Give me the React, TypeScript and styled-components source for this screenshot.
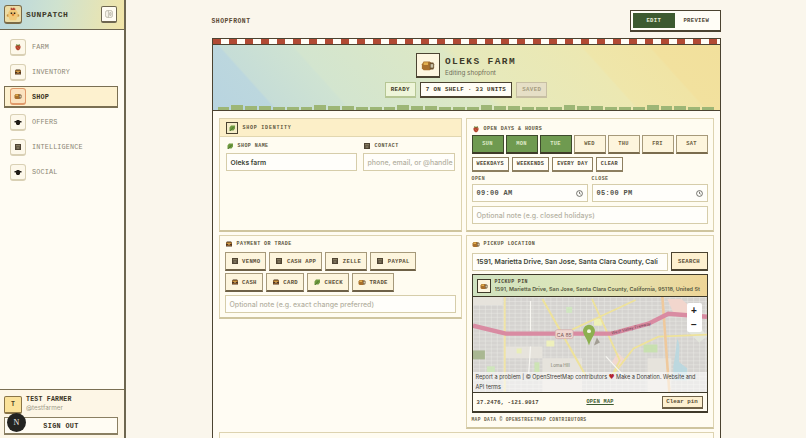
import * as React from 'react'
import styled, { createGlobalStyle } from 'styled-components'

const mono = `'Liberation Mono', 'DejaVu Sans Mono', monospace`
const sans = `Inter, 'Liberation Sans', sans-serif`

const GlobalStyle = createGlobalStyle`
  html, body, #root {
    margin: 0;
    height: 100%;
    overflow: hidden;
  }
  * { box-sizing: border-box; }
  svg { display: block; }
  body {
    background: #faf6ec;
    font-family: ${sans};
  }
`

const Page = styled.div`
  display: flex;
  height: 438px;
  width: 806px;
  overflow: hidden;
`

/* ---------- pixel icons ---------- */

const Berry = () => (
  <svg viewBox="0 0 16 16" width="100%" height="100%">
    <path d="M3 6l3-2h5l2 2v4l-2 3-3 2-3-2-2-3z" fill="#b5452f" />
    <path d="M5 2l3 2 3-2 1 3H4z" fill="#5f8a3a" />
    <path d="M6 8h1v1H6zM10 7h1v1h-1zM8 11h1v1H8z" fill="#e9b77e" />
  </svg>
)
const Chest = () => (
  <svg viewBox="0 0 16 16" width="100%" height="100%">
    <path d="M2 5l2-2h8l2 2v8H2z" fill="#4d3420" />
    <path d="M3 5h10v3H3z" fill="#c98c35" />
    <path d="M3 10h10v2H3z" fill="#8c5a28" />
    <path d="M7 7h2v3H7z" fill="#f1d487" />
  </svg>
)
const Pouch = () => (
  <svg viewBox="0 0 16 16" width="100%" height="100%">
    <path d="M1 7l2-3h7l2 2v6l-2 2H3l-2-2z" fill="#a8702c" />
    <path d="M3 5h5v3H3z" fill="#e2b04f" />
    <path d="M10 5h4l1 2v4l-1 2h-4z" fill="#6e5330" />
    <path d="M11 7h3v4h-3z" fill="#c9c2a8" />
  </svg>
)
const Hat = () => (
  <svg viewBox="0 0 16 16" width="100%" height="100%">
    <path d="M1 6h4V4h6v2h4v3h-3v3l-2 2H6l-2-2V9H1z" fill="#1f1a14" />
  </svg>
)
const Book = () => (
  <svg viewBox="0 0 16 16" width="100%" height="100%">
    <path d="M2 2h12v12H2z" fill="#4f4433" />
    <path d="M4 4h8v3H4z" fill="#857a60" />
    <path d="M5 9h6v1H5zM5 11h6v1H5z" fill="#a89d82" />
  </svg>
)
const Leaf = () => (
  <svg viewBox="0 0 16 16" width="100%" height="100%">
    <path d="M3 14V7l3-4h8v6l-3 4H6z" fill="#6f9a3f" />
    <path d="M4 14l7-8" stroke="#3f6526" strokeWidth="1.4" fill="none" />
  </svg>
)
const Chick = () => (
  <svg viewBox="0 0 18 18" width="100%" height="100%">
    <path d="M6 1h2v1h1V1h2v1h1v2H6z" fill="#b5452f" />
    <path d="M5 4h8l2 3v5l-2 5H5l-2-5V7z" fill="#f1c877" />
    <path d="M6 7h2v2H6zM10 7h2v2h-2z" fill="#2a2118" />
    <path d="M8 9h2l1 1-2 2-2-2z" fill="#d97b2c" />
    <path d="M1 10l2-1v4l-2-1zM17 10l-2-1v4l2-1z" fill="#c9923f" />
  </svg>
)

/* ---------- sidebar ---------- */

const Sidebar = styled.aside`
  flex: 0 0 126px;
  display: flex;
  flex-direction: column;
  background: #fffcf3;
  border-right: 2px solid #6d6650;
`

const Brand = styled.div`
  height: 30px;
  flex: none;
  display: flex;
  align-items: center;
  gap: 4px;
  padding: 0 7px 0 4px;
  background: linear-gradient(100deg, #b9d7df 0%, #cfe2cf 45%, #f2e5a8 100%);
  border-bottom: 1.5px solid #6d6650;
`

const Logo = styled.div`
  width: 18px;
  height: 19px;
  padding: 1px;
  border: 1px solid #7a6a48;
  border-bottom-width: 2px;
  border-radius: 3px;
  background: #eddca5;
`

const BrandName = styled.span`
  flex: 1;
  font: bold 8px ${mono};
  letter-spacing: 0.5px;
  color: #3d3a2a;
`

const Collapse = styled.button`
  width: 16px;
  height: 17px;
  padding: 3px;
  display: flex;
  border: 1px solid #6d6650;
  border-bottom-width: 2px;
  border-radius: 2px;
  background: #fffcf3;
  color: #a3a08f;
`

const Nav = styled.nav`
  flex: 1;
  display: flex;
  flex-direction: column;
  gap: 3px;
  padding: 6px 6px 0 4px;
`

const NavItem = styled.div<{ $active?: boolean }>`
  height: 22px;
  display: flex;
  align-items: center;
  gap: 6px;
  padding-left: 5px;
  font: ${p => (p.$active ? 'bold' : 'normal')} 6.8px ${mono};
  letter-spacing: 0.15px;
  color: ${p => (p.$active ? '#3a3424' : '#8d8775')};
  background: ${p => (p.$active ? '#fdf1cf' : 'transparent')};
  border: ${p => (p.$active ? '1px solid #7a6f52' : '1px solid transparent')};
  border-bottom-width: ${p => (p.$active ? '2px' : '1px')};
`

const NavIcon = styled.span<{ $active?: boolean }>`
  width: 16px;
  height: 17px;
  padding: 3px;
  flex: none;
  display: block;
  border: 1px solid ${p => (p.$active ? '#e09a6a' : '#d9d0b4')};
  border-bottom-width: 2px;
  border-radius: 3px;
  background: ${p => (p.$active ? '#fbe3c0' : '#fdf8ea')};
`

const UserArea = styled.div`
  flex: none;
  height: 49px;
  padding: 6px 6px 0 4px;
  display: flex;
  flex-direction: column;
  gap: 3px;
  background: #fdf6e6;
  border-top: 1.5px solid #7a6f52;
`

const UserRow = styled.div`
  display: flex;
  gap: 4px;
  align-items: flex-start;
`

const Avatar = styled.div`
  width: 18px;
  height: 18px;
  display: flex;
  align-items: center;
  justify-content: center;
  font: bold 6.5px ${mono};
  color: #4a3f25;
  background: #fbe29a;
  border: 1px solid #8a7547;
  border-bottom-width: 2px;
  border-radius: 2px;
`

const UserName = styled.div`
  font: bold 6.5px/8px ${mono};
  letter-spacing: 0.25px;
  color: #3a3424;
`

const UserHandle = styled.div`
  font: 6.3px/9px ${sans};
  color: #a29c8a;
`

const SignOut = styled.button`
  height: 18px;
  padding: 0;
  font: bold 6.8px ${mono};
  letter-spacing: 0.35px;
  color: #3a3424;
  background: #fffcf3;
  border: 1px solid #8a7f62;
  border-bottom-width: 2px;
`

const DevBadge = styled.div`
  position: fixed;
  left: 7px;
  top: 413px;
  width: 19px;
  height: 19px;
  display: flex;
  align-items: center;
  justify-content: center;
  border-radius: 50%;
  background: #232321;
  color: #f4f4f0;
  font: 8px 'Liberation Serif', serif;
`

/* ---------- main column ---------- */

const Main = styled.main`
  flex: 1;
  min-width: 0;
  padding-top: 10px;
  overflow: hidden;
`

const Column = styled.div`
  width: 509px;
  margin: 0 auto;
`

const TopBar = styled.div`
  height: 22px;
  margin-bottom: 6px;
  display: flex;
  align-items: center;
  justify-content: space-between;
`

const PageTitle = styled.h1`
  margin: 0;
  font: bold 6.4px ${mono};
  letter-spacing: 0.5px;
  color: #5a4b35;
`

const Toggle = styled.div`
  width: 91px;
  height: 22px;
  padding: 2px;
  display: flex;
  background: #fffdf6;
  border: 1px solid #4b4331;
  border-bottom-width: 2px;
`

const ToggleOption = styled.div<{ $on?: boolean }>`
  flex: 1;
  display: flex;
  align-items: center;
  justify-content: center;
  font: bold 5.6px ${mono};
  letter-spacing: 0.3px;
  color: ${p => (p.$on ? '#e8eedc' : '#4b4331')};
  background: ${p => (p.$on ? '#3d5a30' : 'transparent')};
`

const Frame = styled.section`
  background: #fffcf3;
  border: 1px solid #4b4331;
  border-bottom: 0;
`

const Awning = styled.div`
  height: 6px;
  background: repeating-linear-gradient(90deg, #b14a34 0 8px, #fffdf6 8px 16px);
  border-bottom: 1px solid #4b4331;
`

const Banner = styled.div`
  height: 66px;
  display: flex;
  flex-direction: column;
  align-items: center;
  background: linear-gradient(
    48deg,
    #b8d4e0 0%,
    #bcd7de 11%,
    #c6ddd7 11.5%,
    #cfe3d2 24%,
    #d3e5cf 24.5%,
    #dde8c5 50%,
    #e6e9bc 52%,
    #ece8b2 75%,
    #efe6aa 75.5%,
    #f0e4a5 87%,
    #f2e19e 87.5%,
    #f2e09c 100%
  );
  border-bottom: 1px solid #4b4331;
`

const ShopHead = styled.div`
  margin-top: 8px;
  display: flex;
  gap: 5px;
`

const ShopBadge = styled.div`
  width: 24px;
  height: 25px;
  padding: 4px;
  background: #fdf6e0;
  border: 1px solid #4b4331;
  border-bottom-width: 2px;
`

const ShopName = styled.div`
  margin-top: 3px;
  font: bold 9.5px/12px ${mono};
  letter-spacing: 1.4px;
  color: #3d3a2a;
`

const ShopSub = styled.div`
  margin-top: 1px;
  font: 6.3px/9px ${sans};
  color: #6f6c58;
`

const Chips = styled.div`
  margin-top: 4px;
  display: flex;
  gap: 4px;
`

const Chip = styled.div<{ $tone: 'ready' | 'count' | 'saved' }>`
  height: 16px;
  padding: 0 5px;
  display: flex;
  align-items: center;
  font: bold 5.8px ${mono};
  letter-spacing: 0.35px;
  white-space: nowrap;
  color: ${p => (p.$tone === 'saved' ? '#a59d80' : '#3a3424')};
  background: ${p => ({ ready: '#eef5d9', count: '#fffdf6', saved: '#e6dfc6' })[p.$tone]};
  border: 1px solid ${p => ({ ready: '#b6c694', count: '#4b4331', saved: '#c7bfa3' })[p.$tone]};
  border-bottom-width: 2px;
`

const Grass = styled.div`
  margin-top: auto;
  width: 100%;
  padding-left: 5px;
  display: flex;
  align-items: flex-end;
  gap: 2px;
  overflow: hidden;
`

const Tuft = styled.span<{ $h: number }>`
  flex: 0 0 11.85px;
  height: ${p => p.$h}px;
  background: #9db676;
`

const Board = styled.div`
  padding: 7px 7px 0 6px;
  display: grid;
  grid-template-columns: 243px 248px;
  gap: 3px 4px;
`

const Card = styled.div<{ $wide?: boolean; $top?: boolean }>`
  grid-column: ${p => (p.$wide ? '1 / -1' : 'auto')};
  align-self: ${p => (p.$top ? 'start' : 'stretch')};
  background: #fffcf1;
  border: 1px solid #ddd3b0;
  border-bottom: 2px solid #cfc59f;
`

const CardBody = styled.div<{ $compact?: boolean }>`
  padding: ${p => (p.$compact ? '3px 5px 4px' : '5px 5px 6px')};
  display: flex;
  flex-direction: column;
`

const IdentityHead = styled.div`
  height: 18px;
  padding: 0 6px;
  display: flex;
  align-items: center;
  gap: 5px;
  background: #fcefc8;
  border-bottom: 1px solid #e2d7b0;
`

const HeadBox = styled.span`
  width: 12px;
  height: 12px;
  padding: 1px;
  display: block;
  background: #f5edc8;
  border: 1px solid #4b4331;
`

const Heading = styled.div`
  display: flex;
  align-items: center;
  gap: 4px;
  height: 10px;
  font: bold 5px ${mono};
  letter-spacing: 0.45px;
  color: #5d5640;
`

const IdentityTitle = styled(Heading)`
  letter-spacing: 0.77px;
`

const SmallIcon = styled.span`
  width: 8px;
  height: 8px;
  flex: none;
  display: block;
`

const IdentityGrid = styled.div`
  padding: 4px 6px 6px;
  display: grid;
  grid-template-columns: 131px 1fr;
  gap: 6px;
`

const Field = styled.label`
  display: flex;
  flex-direction: column;
  gap: 2px;
  min-width: 0;
`

const Input = styled.div<{ $placeholder?: boolean; $mono?: boolean }>`
  height: 18px;
  padding: 0 4px;
  display: flex;
  align-items: center;
  justify-content: space-between;
  overflow: hidden;
  white-space: nowrap;
  background: #fffefa;
  border: 1px solid #d6cdaa;
  font: ${p => (p.$mono ? `bold 7px ${mono}` : p.$placeholder ? `500 7px ${sans}` : `600 6.8px ${sans}`)};
  letter-spacing: ${p => (p.$mono ? '0.3px' : '0')};
  color: ${p => (p.$placeholder ? '#b4b1a2' : p.$mono ? '#55554c' : '#3d4536')};
`

const DayGrid = styled.div`
  margin-top: 1px;
  display: grid;
  grid-template-columns: repeat(7, 1fr);
  gap: 2px;
`

const DayButton = styled.div<{ $on?: boolean }>`
  height: 19px;
  display: flex;
  align-items: center;
  justify-content: center;
  font: bold 5.4px ${mono};
  letter-spacing: 0.3px;
  color: ${p => (p.$on ? '#dfeac8' : '#6b5d42')};
  background: ${p => (p.$on ? '#6f9a50' : '#fdf5dd')};
  border: 1px solid ${p => (p.$on ? '#3e4a2c' : '#a6997a')};
  border-bottom: 2px solid ${p => (p.$on ? '#3e3a28' : '#7a6c4e')};
`

const QuickRow = styled.div`
  margin-top: 3px;
  display: flex;
  gap: 3px;
`

const QuickButton = styled.div`
  height: 15px;
  padding: 0 4px;
  display: flex;
  align-items: center;
  font: bold 5.2px ${mono};
  letter-spacing: 0.3px;
  white-space: nowrap;
  color: #4b4331;
  background: #fffdf6;
  border: 1px solid #8d7f60;
  border-bottom-width: 2px;
`

const TimeGrid = styled.div`
  margin-top: 3px;
  display: grid;
  grid-template-columns: 1fr 1fr;
  gap: 4px;
`

const Label = styled.span`
  height: 7px;
  font: bold 4.9px/7px ${mono};
  letter-spacing: 0.45px;
  color: #6a634b;
`

const ClockIcon = () => (
  <svg width="7" height="7" viewBox="0 0 12 12" fill="none" stroke="#4a4a44" strokeWidth="1.3">
    <circle cx="6" cy="6" r="5" />
    <path d="M6 3v3l2 1" />
  </svg>
)

const NoteInput = styled(Input)<{ $gap: number }>`
  margin-top: ${p => p.$gap}px;
`

const TradeWrap = styled.div`
  display: flex;
  flex-wrap: wrap;
  gap: 2px 3px;
  margin-top: 3px;
`

const TradeButton = styled.div`
  height: 19px;
  padding: 0 5px;
  display: flex;
  align-items: center;
  gap: 3.6px;
  font: bold 5.6px ${mono};
  letter-spacing: 0.3px;
  color: #5b4f37;
  background: #fdf5dd;
  border: 1px solid #a6997a;
  border-bottom: 2px solid #6e6147;
`

const SearchRow = styled.div`
  margin-top: 3px;
  display: flex;
  align-items: center;
  gap: 3px;
`

const SearchInput = styled(Input)`
  flex: 1;
  min-width: 0;
  justify-content: flex-start;
`

const SearchButton = styled.div`
  flex: 0 0 37px;
  height: 19px;
  display: flex;
  align-items: center;
  justify-content: center;
  font: bold 5.6px ${mono};
  letter-spacing: 0.3px;
  color: #5b4f37;
  background: #fdf0d0;
  border: 1px solid #4b4331;
  border-bottom-width: 2px;
`

const PinBox = styled.div`
  margin-top: 3px;
  background: #fffcf1;
  border: 1px solid #3f3a2a;
  border-bottom-width: 2px;
`

const PinHead = styled.div`
  height: 22px;
  padding: 0 4px;
  display: flex;
  align-items: center;
  gap: 4px;
  background: linear-gradient(100deg, #cfe2c0 0%, #dfe6b8 50%, #efd596 100%);
  border-bottom: 1px solid #3f3a2a;
`

const PinIcon = styled.span`
  width: 14px;
  height: 14px;
  padding: 2px;
  flex: none;
  display: block;
  background: #fdf6e0;
  border: 1px solid #3f3a2a;
`

const PinText = styled.div`
  min-width: 0;
  flex: 1;
`

const PinTitle = styled.div`
  font: bold 4.9px/7px ${mono};
  letter-spacing: 0.4px;
  color: #4b4331;
`

const PinAddress = styled.div`
  font: 600 5.45px/8px ${sans};
  color: #55583e;
  overflow: hidden;
  white-space: nowrap;
`

const MapArea = styled.div`
  position: relative;
  height: 96px;
  overflow: hidden;
  background: #e2dfd8;
  border-bottom: 1px solid #3f3a2a;
`

const ZoomControl = styled.div`
  position: absolute;
  top: 6px;
  right: 5px;
  width: 15px;
  height: 29px;
  display: flex;
  flex-direction: column;
  background: #fff;
  border-radius: 2px;
`

const ZoomKey = styled.span`
  flex: 1;
  display: flex;
  align-items: center;
  justify-content: center;
  font: bold 10px 'Liberation Sans', sans-serif;
  color: #222;
`

const Attribution = styled.div`
  position: absolute;
  left: 0;
  right: 0;
  bottom: 0;
  padding: 0 2px 0 3px;
  font: 5.55px/10px ${sans};
  color: #3f4038;
  background: rgba(255, 255, 255, 0.55);
`

const Heart = styled.span`
  color: #b3262e;
`

const PinFoot = styled.div`
  height: 18px;
  padding: 0 4px;
  display: flex;
  align-items: center;
  justify-content: space-between;
`

const Coords = styled.span`
  font: bold 5.5px ${mono};
  letter-spacing: 0.15px;
  color: #4b4331;
`

const MapLink = styled.span`
  font: bold 5.2px ${mono};
  letter-spacing: 0.3px;
  color: #3d5a30;
  text-decoration: underline;
`

const ClearButton = styled.div`
  width: 41px;
  height: 13px;
  display: flex;
  align-items: center;
  justify-content: center;
  font: bold 5.8px ${mono};
  color: #5b4f37;
  background: #fdf0d0;
  border: 1px solid #6e6147;
  border-bottom-width: 2px;
`

const MapNote = styled.div`
  margin-top: 3px;
  font: bold 4.6px/7px ${mono};
  letter-spacing: 0.35px;
  color: #6a634b;
`

const StubCard = styled(Card)`
  height: 40px;
`

const MapDrawing = () => (
  <svg width="100%" height="100%" viewBox="0 0 236 96" preserveAspectRatio="none">
    <defs>
      <pattern id="blocks" width="6" height="4" patternUnits="userSpaceOnUse">
        <rect width="6" height="4" fill="#d5d3d0" />
        <path d="M0 0h6M0 0v4" stroke="#efede9" strokeWidth="0.8" />
      </pattern>
    </defs>
    <rect width="236" height="96" fill="url(#blocks)" />
    {/* open ground and parks */}
    <path d="M0 0h30v8H0zM32 50h38v12H32zM70 62h40v34H70zM176 62h24v34h-24z" fill="#e6e3dc" />
    <rect x="0" y="54" width="12" height="9" fill="#a9b792" />
    <rect x="74" y="44" width="8" height="6" fill="#eef0bc" />
    <rect x="44" y="52" width="5" height="5" fill="#e9eeb8" />
    <rect x="14" y="70" width="8" height="6" fill="#cfe6bc" />
    <rect x="62" y="66" width="5" height="10" fill="#cde4b4" />
    <rect x="122" y="22" width="8" height="7" fill="#edf0b8" />
    <rect x="94" y="10" width="6" height="6" fill="#cfe6c0" />
    <rect x="172" y="48" width="14" height="8" fill="#c8e0b0" />
    <path d="M146 56l8 8-6 8-8-6z" fill="#f1d8d0" />
    <path d="M196 2h14l14 12-4 8-18-6z" fill="#f2d6cd" />
    <path d="M206 42c4 8 1 16 2 24l8 6v12h-14v-14l2-12z" fill="#bcd8df" />
    <path d="M216 24l12 4 8 12-8 6-10-10z" fill="#e3e6dc" />
    {/* roads */}
    <path d="M32 0v96" stroke="#f0e4a6" strokeWidth="2" />
    <path d="M70 2l44 78" stroke="#eee29a" strokeWidth="2" fill="none" />
    <path d="M120 2l28 62-8 16" stroke="#eee29a" strokeWidth="1.8" fill="none" />
    <path d="M100 33l30-14 34-16" stroke="#eee29a" strokeWidth="1.8" fill="none" />
    <path d="M140 80l22-28 25-12 50-2" stroke="#eee29a" strokeWidth="1.8" fill="none" />
    <path d="M191 0l7 96" stroke="#efc99c" strokeWidth="2.6" />
    <path d="M58 4v30M58 50l-2 30M134 60l22 24" stroke="#f8f7f2" strokeWidth="1.2" fill="none" />
    {/* freeway */}
    <path d="M0 29l33 8h107l37-10 20-10 39 3" stroke="#d98ba2" strokeWidth="4.4" fill="none" />
    <rect x="83" y="33" width="18" height="9" rx="2" fill="#f0d7d0" stroke="#cfa3a3" strokeWidth="0.6" />
    <text x="92" y="40" fontSize="5.2" fontFamily="Inter, sans-serif" textAnchor="middle" fill="#7c5a5a">CA 85</text>
    <text x="140" y="38" fontSize="4.2" fontFamily="Inter, sans-serif" fill="#6e3f50" transform="rotate(-14 140 38)">West Valley Freeway</text>
    <text x="88" y="71" fontSize="4.4" fontFamily="Inter, sans-serif" textAnchor="middle" fill="#7c7a6c">Loma Hill</text>
    {/* pin */}
    <path d="M122 49l6-3-3-5z" fill="#8a8478" opacity="0.7" />
    <path d="M117 28c-4 0-6 4-6 6 0 5 4 7 6 15 2-8 6-10 6-15 0-2-2-6-6-6z" fill="#8cb04f" />
    <circle cx="117" cy="34.5" r="2" fill="#f2f6e2" />
  </svg>
)

const days: [string, boolean][] = [
  ['SUN', true],
  ['MON', true],
  ['TUE', true],
  ['WED', false],
  ['THU', false],
  ['FRI', false],
  ['SAT', false]
]

const navItems = [
  { label: 'FARM', icon: <Berry /> },
  { label: 'INVENTORY', icon: <Chest /> },
  { label: 'SHOP', icon: <Pouch />, active: true },
  { label: 'OFFERS', icon: <Hat /> },
  { label: 'INTELLIGENCE', icon: <Book /> },
  { label: 'SOCIAL', icon: <Hat /> }
]

const payments = [
  { label: 'VENMO', icon: <Book /> },
  { label: 'CASH APP', icon: <Book /> },
  { label: 'ZELLE', icon: <Book /> },
  { label: 'PAYPAL', icon: <Book /> },
  { label: 'CASH', icon: <Chest /> },
  { label: 'CARD', icon: <Chest /> },
  { label: 'CHECK', icon: <Leaf /> },
  { label: 'TRADE', icon: <Pouch /> }
]

const tufts = Array.from({ length: 36 }, (_, i) => [3, 5, 4.5, 4, 3.5, 3][i % 6])

export default function App() {
  return (
    <Page>
      <GlobalStyle />
      <Sidebar>
        <Brand>
          <Logo>
            <Chick />
          </Logo>
          <BrandName>SUNPATCH</BrandName>
          <Collapse>
            <svg width="100%" height="100%" viewBox="0 0 12 12" fill="none" stroke="currentColor">
              <rect x="1" y="1" width="10" height="10" rx="2" />
              <path d="M5 1v10" />
              <path d="M7 4h2v4H7z" />
            </svg>
          </Collapse>
        </Brand>
        <Nav>
          {navItems.map(item => (
            <NavItem key={item.label} $active={item.active}>
              <NavIcon $active={item.active}>{item.icon}</NavIcon>
              {item.label}
            </NavItem>
          ))}
        </Nav>
        <UserArea>
          <UserRow>
            <Avatar>T</Avatar>
            <div>
              <UserName>TEST FARMER</UserName>
              <UserHandle>@testfarmer</UserHandle>
            </div>
          </UserRow>
          <SignOut>SIGN OUT</SignOut>
        </UserArea>
      </Sidebar>
      <DevBadge>N</DevBadge>

      <Main>
        <Column>
          <TopBar>
            <PageTitle>SHOPFRONT</PageTitle>
            <Toggle>
              <ToggleOption $on>EDIT</ToggleOption>
              <ToggleOption>PREVIEW</ToggleOption>
            </Toggle>
          </TopBar>

          <Frame>
            <Awning />
            <Banner>
              <ShopHead>
                <ShopBadge>
                  <Pouch />
                </ShopBadge>
                <div>
                  <ShopName>OLEKS FARM</ShopName>
                  <ShopSub>Editing shopfront</ShopSub>
                </div>
              </ShopHead>
              <Chips>
                <Chip $tone="ready">READY</Chip>
                <Chip $tone="count">7 ON SHELF · 33 UNITS</Chip>
                <Chip $tone="saved">SAVED</Chip>
              </Chips>
              <Grass>
                {tufts.map((h, i) => (
                  <Tuft key={i} $h={h} />
                ))}
              </Grass>
            </Banner>

            <Board>
              <Card>
                <IdentityHead>
                  <HeadBox>
                    <Leaf />
                  </HeadBox>
                  <IdentityTitle>SHOP IDENTITY</IdentityTitle>
                </IdentityHead>
                <IdentityGrid>
                  <Field>
                    <Heading>
                      <SmallIcon>
                        <Leaf />
                      </SmallIcon>
                      SHOP NAME
                    </Heading>
                    <Input>Oleks farm</Input>
                  </Field>
                  <Field>
                    <Heading>
                      <SmallIcon>
                        <Book />
                      </SmallIcon>
                      CONTACT
                    </Heading>
                    <Input $placeholder>phone, email, or @handle</Input>
                  </Field>
                </IdentityGrid>
              </Card>

              <Card>
                <CardBody>
                  <Heading>
                    <SmallIcon>
                      <Berry />
                    </SmallIcon>
                    OPEN DAYS &amp; HOURS
                  </Heading>
                  <DayGrid>
                    {days.map(([day, on]) => (
                      <DayButton key={day} $on={on}>
                        {day}
                      </DayButton>
                    ))}
                  </DayGrid>
                  <QuickRow>
                    <QuickButton>WEEKDAYS</QuickButton>
                    <QuickButton>WEEKENDS</QuickButton>
                    <QuickButton>EVERY DAY</QuickButton>
                    <QuickButton>CLEAR</QuickButton>
                  </QuickRow>
                  <TimeGrid>
                    <Field>
                      <Label>OPEN</Label>
                      <Input $mono>
                        09:00 AM
                        <ClockIcon />
                      </Input>
                    </Field>
                    <Field>
                      <Label>CLOSE</Label>
                      <Input $mono>
                        05:00 PM
                        <ClockIcon />
                      </Input>
                    </Field>
                  </TimeGrid>
                  <NoteInput $placeholder $gap={4}>
                    Optional note (e.g. closed holidays)
                  </NoteInput>
                </CardBody>
              </Card>

              <Card $top>
                <CardBody $compact>
                  <Heading>
                    <SmallIcon>
                      <Chest />
                    </SmallIcon>
                    PAYMENT OR TRADE
                  </Heading>
                  <TradeWrap>
                    {payments.map(pay => (
                      <TradeButton key={pay.label}>
                        <SmallIcon>{pay.icon}</SmallIcon>
                        {pay.label}
                      </TradeButton>
                    ))}
                  </TradeWrap>
                  <NoteInput $placeholder $gap={3}>
                    Optional note (e.g. exact change preferred)
                  </NoteInput>
                </CardBody>
              </Card>

              <Card>
                <CardBody $compact>
                  <Heading>
                    <SmallIcon>
                      <Pouch />
                    </SmallIcon>
                    PICKUP LOCATION
                  </Heading>
                  <SearchRow>
                    <SearchInput>1591, Marietta Drive, San Jose, Santa Clara County, Cali</SearchInput>
                    <SearchButton>SEARCH</SearchButton>
                  </SearchRow>
                  <PinBox>
                    <PinHead>
                      <PinIcon>
                        <Pouch />
                      </PinIcon>
                      <PinText>
                        <PinTitle>PICKUP PIN</PinTitle>
                        <PinAddress>1591, Marietta Drive, San Jose, Santa Clara County, California, 95118, United St</PinAddress>
                      </PinText>
                    </PinHead>
                    <MapArea>
                      <MapDrawing />
                      <ZoomControl>
                        <ZoomKey>+</ZoomKey>
                        <ZoomKey>−</ZoomKey>
                      </ZoomControl>
                      <Attribution>
                        Report a problem | © OpenStreetMap contributors <Heart>♥</Heart> Make a Donation. Website and API terms
                      </Attribution>
                    </MapArea>
                    <PinFoot>
                      <Coords>37.2476, -121.9017</Coords>
                      <MapLink>OPEN MAP</MapLink>
                      <ClearButton>Clear pin</ClearButton>
                    </PinFoot>
                  </PinBox>
                  <MapNote>MAP DATA © OPENSTREETMAP CONTRIBUTORS</MapNote>
                </CardBody>
              </Card>

              <StubCard $wide />
            </Board>
          </Frame>
        </Column>
      </Main>
    </Page>
  )
}
